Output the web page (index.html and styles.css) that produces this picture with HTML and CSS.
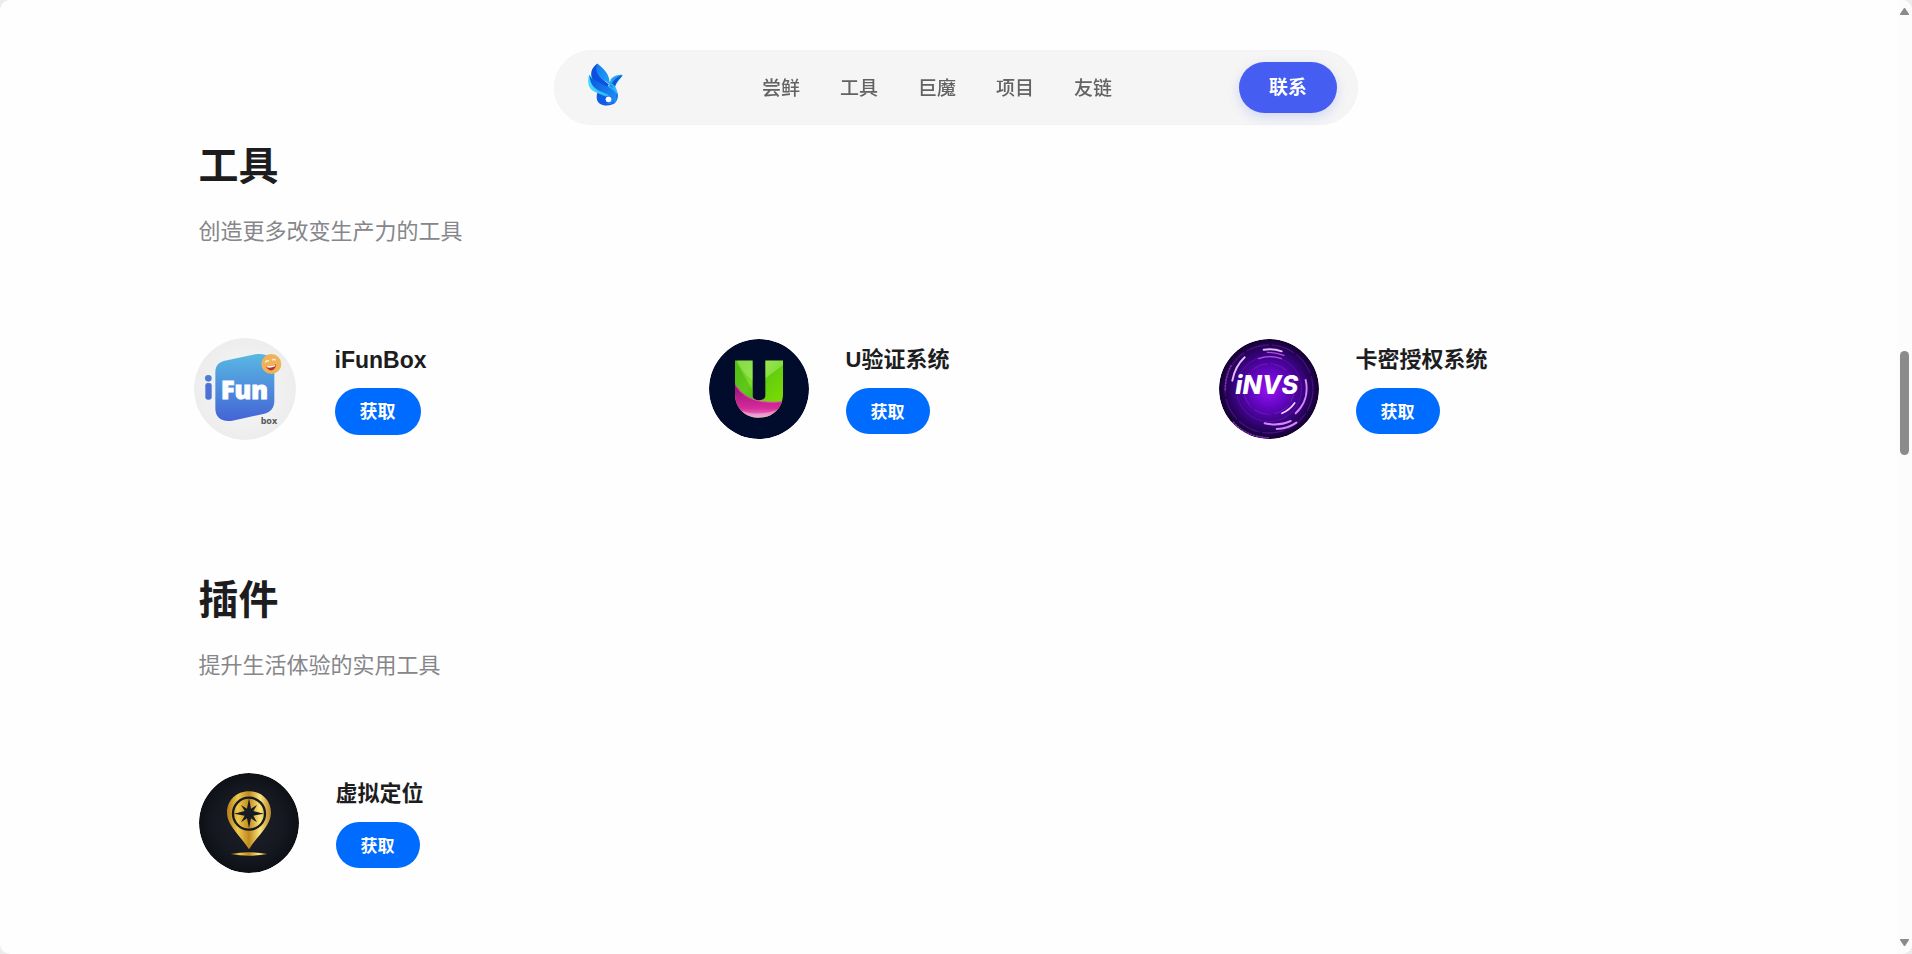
FILE: index.html
```html
<!DOCTYPE html>
<html lang="zh-CN">
<head>
<meta charset="utf-8">
<meta name="viewport" content="width=device-width, initial-scale=1">
<title>工具</title>
<link rel="stylesheet" href="styles.css">
</head>
<body>
<div class="window">
<header class="nav-wrap">
  <nav class="nav">
    <a class="nav-logo" href="#" aria-label="首页">
      <svg viewBox="102 67 186 150" aria-hidden="true">
        <defs>
          <linearGradient id="b1" x1="0" y1="0" x2="1" y2="1"><stop offset="0" stop-color="#1478ee"/><stop offset=".5" stop-color="#1a9cf8"/><stop offset="1" stop-color="#35c6fb"/></linearGradient>
          <linearGradient id="b2" x1="0" y1="0" x2="1" y2="0"><stop offset="0" stop-color="#4be0fc"/><stop offset="1" stop-color="#1c9cf7"/></linearGradient>
          <linearGradient id="b3" x1="0" y1="0" x2="1" y2="1"><stop offset="0" stop-color="#0b55de"/><stop offset="1" stop-color="#1c94f6"/></linearGradient>
        </defs>
        <path fill="#1fa4f8" d="M249 101c-15 0-29 4-36 14l-6 22 18 8c3-17 12-27 24-40z"/>
        <path fill="#0d59d8" d="M246 103c-13 3-27 15-34 33l12 8c3-15 11-26 22-37z"/>
        <path fill="#0f5de4" d="M172 155c-5 12-3 28 5 34 12 10 37 10 49-1 10-10 11-24 6-36z"/>
        <path fill="url(#b2)" d="M146 100c-6 17-5 38 9 49 12 9 28 12 42 19l36-10c-10-28-60-26-87-58z"/>
        <path fill="#0c50df" d="M171 66c-15 11-21 26-18 40 6 20 28 24 48 36l6-12c-20-14-40-30-36-64z"/>
        <path fill="url(#b1)" d="M171 66c-7 16-2 32 10 44 14 14 42 20 52 55 2-20-8-33-24-42 0-24-20-43-38-57z"/>
        <path fill="url(#b3)" d="M147 102c6 16 22 18 40 28 22 10 40 18 44 38 2 11-2 18-9 24 2-16-6-26-22-32-18-7-52-14-53-58z"/>
        <path fill="#1b86f2" d="M194 158c20 0 30 12 28 26-5 8-16 10-26 6 12 0 20-5 20-14 0-8-8-14-22-18z"/>
        <circle cx="206" cy="177" r="9" fill="#fff"/>
      </svg>
    </a>
    <div class="nav-links">
      <a href="#fresh">尝鲜</a>
      <a href="#tools">工具</a>
      <a href="#giant">巨魔</a>
      <a href="#projects">项目</a>
      <a href="#friends">友链</a>
    </div>
    <button class="nav-contact" type="button">联系</button>
  </nav>
</header>

<main class="page">
  <section class="section" id="tools">
    <h2 class="section-title">工具</h2>
    <p class="section-sub">创造更多改变生产力的工具</p>
    <div class="grid">
      <article class="card card-raised">
        <svg class="card-icon" viewBox="28 39 306 306" aria-hidden="true">
          <defs>
            <radialGradient id="f0"><stop offset="0" stop-color="#f7f8f8"/><stop offset="1" stop-color="#ededee"/></radialGradient>
            <linearGradient id="f1" x1="0" y1="0" x2="0" y2="1"><stop offset="0" stop-color="#58b8e2"/><stop offset="1" stop-color="#4464d6"/></linearGradient>
          </defs>
          <circle cx="181" cy="192" r="153" fill="url(#f0)"/>
          <path fill="url(#f1)" d="M92 144c0-22 8-31 28-37l92-19c36-5 57 12 57 42v97c0 22-11 33-30 39l-96 21c-33 5-51-9-51-37z"/>
          <circle cx="71" cy="160" r="10" fill="#4d7cd3"/>
          <rect x="62" y="174" width="19" height="50" rx="7" fill="#4d72d3"/>
          <text class="fun" x="109" y="221">Fun</text>
          <circle cx="260" cy="117" r="30" fill="#efb258"/>
          <path d="M242 112q5-8 11-3M262 106q6-6 11 0" fill="none" stroke="#fff4d8" stroke-width="4"/>
          <path fill="#b8322c" d="M244 124q15 4 30-6c0 21-24 25-30 6z"/>
          <path fill="#fff" d="M246 123q14 3 26-4l-1 5q-13 6-24 3z"/>
          <text class="box" x="228" y="298">box</text>
        </svg>
        <div class="card-body">
          <h3 class="card-title">iFunBox</h3>
          <button class="get" type="button">获取</button>
        </div>
      </article>
      <article class="card">
        <svg class="card-icon" viewBox="27 42 300 300" aria-hidden="true">
          <defs>
            <linearGradient id="u1" x1="0" y1="0" x2="1" y2="1"><stop offset="0" stop-color="#5cc81c"/><stop offset=".35" stop-color="#7fdc2a"/><stop offset=".5" stop-color="#62cf0d"/><stop offset="1" stop-color="#8be000"/></linearGradient>
            <linearGradient id="u2" x1="0" y1="0" x2="0" y2="1"><stop offset="0" stop-color="#8d0f7a"/><stop offset=".65" stop-color="#d62c9a"/><stop offset="1" stop-color="#f5b8dc"/></linearGradient>
            <clipPath id="uc"><path d="M105 106h53v106c0 18 38 18 38 0V106h53v100c0 96-144 96-144 0z"/></clipPath>
          </defs>
          <circle cx="177" cy="192" r="150" fill="#010c2c"/>
          <g clip-path="url(#uc)">
            <path fill="url(#u1)" d="M105 106h144v180H105z"/>
            <path fill="#3fae0c" d="M105 106l53 90v40l-53-50z" opacity=".45"/>
            <path fill="#b4f07c" d="M110 106h48v60q-30-20-48-60zM196 160l53-40v-14h-53z" opacity=".45"/>
            <path fill="url(#u2)" d="M105 176c28 48 80 60 144 54v60H105z"/>
            <path fill="none" stroke="#ee4db0" stroke-width="3" d="M105 178c28 48 80 58 144 52"/>
            <path fill="#fff" opacity=".3" d="M118 256q55 20 116-2l-18 28h-70z"/>
          </g>
        </svg>
        <div class="card-body">
          <h3 class="card-title">U验证系统</h3>
          <button class="get" type="button">获取</button>
        </div>
      </article>
      <article class="card">
        <svg class="card-icon" viewBox="27 42 300 300" aria-hidden="true">
          <defs>
            <radialGradient id="v0"><stop offset="0" stop-color="#9a12f4"/><stop offset=".35" stop-color="#6606c6"/><stop offset=".72" stop-color="#350379"/><stop offset="1" stop-color="#12012f"/></radialGradient>
          </defs>
          <circle cx="177" cy="192" r="150" fill="url(#v0)"/>
          <g fill="none" stroke-linecap="round">
            <circle cx="177" cy="192" r="98" stroke="#8425cf" stroke-width="2" opacity=".55"/>
            <circle cx="177" cy="192" r="76" stroke="#a238e8" stroke-width="2" stroke-dasharray="40 14 3 5" opacity=".6"/>
            <circle cx="177" cy="192" r="132" stroke="#7421af" stroke-width="4" stroke-dasharray="2 5 60 12" opacity=".45"/>
            <path stroke="#e5b8ff" stroke-width="6" d="M67 167q8-43 37-70M161 74q29-4 54 5"/>
            <path stroke="#d884ff" stroke-width="6" d="M287 165c9 40-4 76-30 100M164 295q43 9 78-7M200 312q34-1 59-19"/>
            <path stroke="#f0d5ff" stroke-width="5" d="M216 265q23-10 38-31"/>
            <path stroke="#b44de8" stroke-width="4" d="M146 101q33-12 68 0M172 82q22 0 50 9"/>
            <path stroke="#7f2daf" stroke-width="5" stroke-dasharray="3 6" d="M46 194q0-39 17-72M70 292q40 44 105 46"/>
          </g>
          <text class="invs" x="76" y="208">iNVS</text>
        </svg>
        <div class="card-body">
          <h3 class="card-title">卡密授权系统</h3>
          <button class="get" type="button">获取</button>
        </div>
      </article>
    </div>
  </section>

  <section class="section" id="plugins">
    <h2 class="section-title">插件</h2>
    <p class="section-sub">提升生活体验的实用工具</p>
    <div class="grid">
      <article class="card">
        <svg class="card-icon" viewBox="42 38 300 300" aria-hidden="true">
          <defs>
            <radialGradient id="p0"><stop offset="0" stop-color="#1c2029"/><stop offset=".7" stop-color="#151820"/><stop offset="1" stop-color="#0e1016"/></radialGradient>
            <linearGradient id="p1" x1="0" y1="0" x2="1" y2="0"><stop offset="0" stop-color="#b27a18"/><stop offset=".25" stop-color="#f0c94c"/><stop offset=".5" stop-color="#c08a1e"/><stop offset=".75" stop-color="#fbe67c"/><stop offset="1" stop-color="#b8862a"/></linearGradient>
          </defs>
          <circle cx="192" cy="188" r="150" fill="url(#p0)"/>
          <path fill="url(#p1)" d="M192 93c-38 0-66 27-66 64 0 40 44 72 66 110 22-38 66-70 66-110 0-37-28-64-66-64z"/>
          <circle cx="192" cy="160" r="48" fill="none" stroke="#171a20" stroke-width="7"/>
          <path fill="#171a20" d="M192 114l6 31 18-11-11 18 32 8-32 6 11 20-18-12-6 30-6-30-18 12 11-20-32-6 32-8-11-18 18 11z"/>
          <path fill="url(#p1)" d="M137 281q55-10 110 0-55 10-110 0z"/>
        </svg>
        <div class="card-body">
          <h3 class="card-title">虚拟定位</h3>
          <button class="get" type="button">获取</button>
        </div>
      </article>
    </div>
  </section>
</main>

<div class="scrollbar" aria-hidden="true">
  <svg class="arrow" viewBox="0 0 9 7"><path d="M4 0h1l4 6v1H0V6z"/></svg>
  <div class="track"><div class="thumb"></div></div>
  <svg class="arrow" viewBox="0 0 9 7"><path d="M0 0h9v1L5 7H4L0 1z"/></svg>
</div>
</div>
</body>
</html>
```

FILE: styles.css
```css
* {
  box-sizing: border-box;
}

body {
  margin: 0;
  background: #ececec;
  color: #1d1d1f;
  font-family: "Liberation Sans", "Noto Sans CJK SC", sans-serif;
}

h2,
h3,
p {
  margin: 0;
}

button {
  border: 0;
  padding: 0;
  font-family: inherit;
  cursor: pointer;
}

.window {
  min-height: 100vh;
  background: #fefefe;
  border-radius: 10px;
  padding-right: 15px;
}

/* Floating navigation */
.nav-wrap {
  position: fixed;
  top: 50px;
  left: 0;
  right: 0;
  z-index: 10;
  display: flex;
  justify-content: center;
}

.nav {
  display: flex;
  align-items: center;
  justify-content: space-between;
  width: 100%;
  max-width: 804px;
  padding: 11px 20px;
  border: 1px solid #f3f3f3;
  border-radius: 40px;
  background: #f5f5f5;
}

.nav-logo svg {
  display: block;
  width: 60px;
  height: 50px;
}

.nav-links {
  display: flex;
  gap: 40px;
  padding-bottom: 2px;
}

.nav-links a {
  color: #636363;
  font-family: "Noto Sans CJK SC", sans-serif;
  font-size: 19px;
  font-weight: 500;
  line-height: 28px;
  text-decoration: none;
}

.nav-contact {
  height: 51px;
  padding: 0 30px 4px;
  border-radius: 26px;
  background: #455df0;
  box-shadow: 0 4px 12px rgba(69, 93, 240, 0.2);
  color: #fff;
  font-size: 19px;
  font-weight: 700;
}

/* Sections */
.page {
  max-width: 1500px;
  margin: 0 auto;
  padding: 136px 0 80px;
}

.section + .section {
  margin-top: 131px;
}

.section-title {
  font-size: 40px;
  line-height: 60px;
}

.section-sub {
  margin-top: 19px;
  color: #86868b;
  font-size: 22px;
  line-height: 34px;
}

.grid {
  display: grid;
  grid-template-columns: repeat(3, 1fr);
  gap: 30px;
  margin-top: 90px;
}

.card {
  display: flex;
  align-items: center;
  gap: 37px;
}

.card-icon {
  flex: none;
  width: 100px;
  height: 100px;
  border-radius: 50%;
}

.card-title {
  font-size: 22px;
  line-height: 32px;
}

.get {
  display: block;
  height: 46px;
  margin-top: 12px;
  padding: 0 25px 2px;
  border-radius: 24px;
  background: #006cff;
  color: #fff;
  font-size: 17px;
  font-weight: 700;
}

.card-raised {
  margin: -1px -5px;
  gap: 39px;
}

.card-raised .card-icon {
  width: 102px;
  height: 102px;
}

.card-raised .card-title {
  font-size: 23px;
}

.card-raised .get {
  height: 47px;
  font-size: 18px;
}

/* Lettering inside the app icons */
.fun {
  fill: #fff;
  stroke: #fff;
  stroke-width: 3px;
  font: 800 75px "Open Sans", sans-serif;
}

.box {
  fill: #55565c;
  font: 700 27px "Open Sans", sans-serif;
}

.invs {
  fill: #fff;
  font: italic 800 76px Inter, sans-serif;
}

/* Page scrollbar */
.scrollbar {
  position: fixed;
  top: 0;
  right: 0;
  bottom: 0;
  display: flex;
  flex-direction: column;
  align-items: center;
  width: 15px;
  padding: 8px 0;
  border-radius: 0 10px 10px 0;
  background: #fcfcfc;
}

.arrow {
  width: 9px;
  height: 7px;
  fill: #8b8b8b;
}

.track {
  display: flex;
  flex-direction: column;
  flex: 1;
  padding-top: 336px;
}

.thumb {
  width: 9px;
  height: 104px;
  border-radius: 5px;
  background: #8b8b8b;
}
```
